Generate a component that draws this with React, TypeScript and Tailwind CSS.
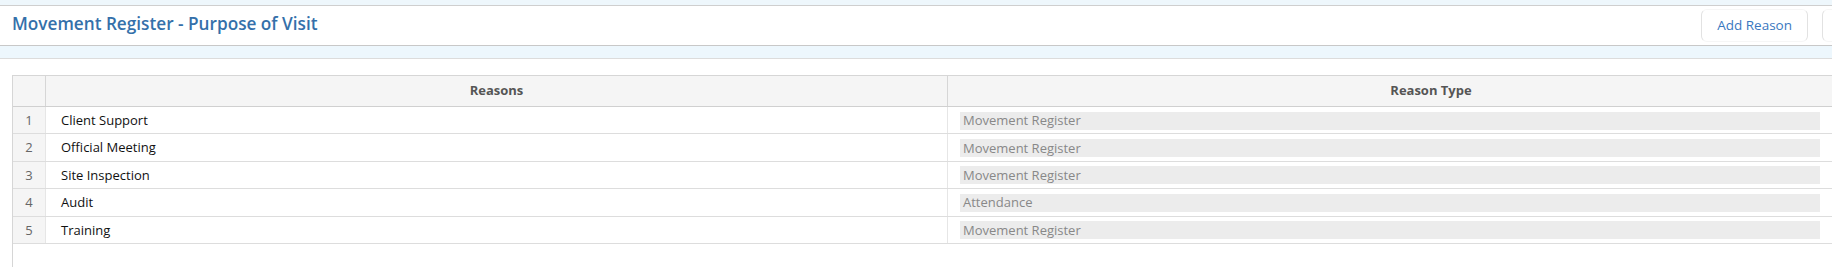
import React from 'react'

const rows = [
  { reason: 'Client Support', type: 'Movement Register' },
  { reason: 'Official Meeting', type: 'Movement Register' },
  { reason: 'Site Inspection', type: 'Movement Register' },
  { reason: 'Audit', type: 'Attendance' },
  { reason: 'Training', type: 'Movement Register' },
]

const font = { fontFamily: '"Segoe UI", "Open Sans", "Noto Sans", sans-serif' }

export default function App() {
  return (
    <div className="w-[1832px] h-[267px] overflow-hidden bg-white" style={font}>
      <div className="h-[6px] bg-[#eef7fc] border-b border-[#cfcfcf]" />
      <div className="h-[40px] bg-white border-b border-[#c8c8c8] flex items-center justify-between pl-3">
        <h1 className="text-[17.2px] font-semibold text-[#3470aa] leading-none -mt-[4px]">
          Movement Register - Purpose of Visit
        </h1>
        <div className="flex items-center gap-[14px] -mr-[10px]">
          <button className="h-[33px] px-[15px] rounded-[6px] border border-[#e2e2e2] border-y-[#f6f6f6] bg-white text-[13.5px] text-[#3a78c0]">
            Add Reason
          </button>
          <div className="h-[33px] w-[20px] rounded-[6px] border border-[#e2e2e2] border-y-[#f6f6f6]" />
        </div>
      </div>
      <div className="h-[13px] bg-[#edf7fd] border-b border-[#dcdcdc]" />
      <div className="pt-[16px] pl-[12px]">
        <div className="w-[1902px] h-[200px] border-l border-t border-[#d6d6d6]">
          <div className="grid grid-cols-[33px_902px_966px] h-[31px] bg-[#f5f5f5] border-b border-[#d0d0d0] text-[13px] font-bold text-[#555]">
            <div className="border-r border-[#d6d6d6]" />
            <div className="border-r border-[#d6d6d6] flex items-center justify-center">Reasons</div>
            <div className="flex items-center justify-center">Reason Type</div>
          </div>
          {rows.map((r, i) => (
            <div
              key={i}
              className="grid grid-cols-[33px_902px_966px] h-[27.4px] border-b border-[#dddddd] text-[13px]"
            >
              <div className="bg-[#f5f5f5] border-r border-[#e6e6e6] flex items-center justify-center pt-[1px] text-[#666]">
                {i + 1}
              </div>
              <div className="border-r border-[#e6e6e6] flex items-center pl-[15px] pt-[1px] text-[#111]">{r.reason}</div>
              <div className="flex items-center pl-[12px] pt-[1px]">
                <div className="w-[860px] h-[18px] bg-[#ececec] pl-[3px] flex items-center text-[#888] leading-none">
                  {r.type}
                </div>
              </div>
            </div>
          ))}
        </div>
      </div>
    </div>
  )
}
